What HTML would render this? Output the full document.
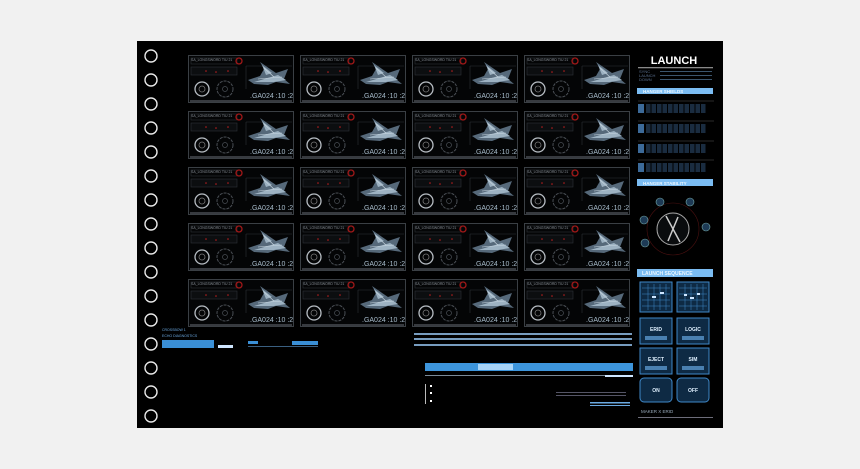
<!DOCTYPE html>
<html><head><meta charset="utf-8"><style>
html,body{margin:0;padding:0;background:#f1f1f1;}
svg{display:block}
text{font-family:"Liberation Sans",sans-serif;}
</style></head><body>
<svg width="860" height="469" viewBox="0 0 860 469" xmlns="http://www.w3.org/2000/svg">
<rect width="860" height="469" fill="#f1f1f1"/>
<rect x="137" y="41" width="586" height="387" fill="#000"/>
<defs>
<g id="tile">
 <rect x="0.5" y="0.5" width="105" height="47" fill="#040506" stroke="#3a3f44"/>
 <line x1="2" y1="46" x2="104" y2="46" stroke="#6a7078"/>
 <rect x="3" y="3" width="46" height="6" fill="none" stroke="#2e3338" stroke-width="0.6"/>
 <rect x="3" y="12" width="46" height="8" fill="#0c0e10" stroke="#2e3338" stroke-width="0.6"/>
 <circle cx="18" cy="16" r="0.8" fill="#c02020"/><circle cx="28" cy="17" r="0.8" fill="#c02020"/><circle cx="40" cy="16" r="0.8" fill="#c02020"/>
 <circle cx="51" cy="6" r="3" fill="none" stroke="#a01818" stroke-width="1.3"/>
 <path d="M58 11 L104 11 M58 11 L58 34" stroke="#2e3338" stroke-width="0.6" fill="none"/>
 <path d="M72 7 L88 18 L100 14 L96 24 L102 29 L88 27 L80 30 L66 29 L60 25 L72 21 L76 14 Z" fill="#56697a"/>
 <path d="M66 27 L90 20 L98 25 L86 27 Z M74 10 L84 18 L78 20 Z" fill="#9db2c2"/>
 <path d="M70 24 L94 22 M76 13 L86 22" stroke="#c8d6e0" stroke-width="0.6"/>
 <circle cx="14" cy="34" r="7" fill="none" stroke="#b8bec4" stroke-width="1.3"/>
 <circle cx="14" cy="34" r="3" fill="none" stroke="#777" stroke-width="0.8"/>
 <circle cx="37" cy="34" r="8" fill="none" stroke="#4a4f55" stroke-width="1" stroke-dasharray="3 1"/>
 <circle cx="37" cy="34" r="2.5" fill="none" stroke="#4a4f55" stroke-width="0.7"/>
</g>
<g id="seg" fill="#1a2c40">
 <rect x="0" y="0" width="6" height="9" fill="#3c6a99"/>
 <rect x="8" y="0" width="4.5" height="9"/><rect x="13.5" y="0" width="4.5" height="9"/><rect x="19" y="0" width="4.5" height="9"/><rect x="24.5" y="0" width="4.5" height="9"/><rect x="30" y="0" width="4.5" height="9"/><rect x="35.5" y="0" width="4.5" height="9"/><rect x="41" y="0" width="4.5" height="9"/><rect x="46.5" y="0" width="4.5" height="9"/><rect x="52" y="0" width="4.5" height="9"/><rect x="57.5" y="0" width="4.5" height="9"/><rect x="63" y="0" width="4.5" height="9"/>
</g>
</defs>
<g fill="none" stroke="#e8e8e8" stroke-width="1.4">
<circle cx="151" cy="56" r="6"/><circle cx="151" cy="80" r="6"/><circle cx="151" cy="104" r="6"/><circle cx="151" cy="128" r="6"/>
<circle cx="151" cy="152" r="6"/><circle cx="151" cy="176" r="6"/><circle cx="151" cy="200" r="6"/><circle cx="151" cy="224" r="6"/>
<circle cx="151" cy="248" r="6"/><circle cx="151" cy="272" r="6"/><circle cx="151" cy="296" r="6"/><circle cx="151" cy="320" r="6"/>
<circle cx="151" cy="344" r="6"/><circle cx="151" cy="368" r="6"/><circle cx="151" cy="392" r="6"/><circle cx="151" cy="416" r="6"/>
</g>
<g>
<use href="#tile" x="188" y="55"/><use href="#tile" x="300" y="55"/><use href="#tile" x="412" y="55"/><use href="#tile" x="524" y="55"/>
<use href="#tile" x="188" y="111"/><use href="#tile" x="300" y="111"/><use href="#tile" x="412" y="111"/><use href="#tile" x="524" y="111"/>
<use href="#tile" x="188" y="167"/><use href="#tile" x="300" y="167"/><use href="#tile" x="412" y="167"/><use href="#tile" x="524" y="167"/>
<use href="#tile" x="188" y="223"/><use href="#tile" x="300" y="223"/><use href="#tile" x="412" y="223"/><use href="#tile" x="524" y="223"/>
<use href="#tile" x="188" y="279"/><use href="#tile" x="300" y="279"/><use href="#tile" x="412" y="279"/><use href="#tile" x="524" y="279"/>
</g>
<g fill="#a8bccb" font-size="7">
<text x="250" y="98">.GA024 :10 :2</text><text x="362" y="98">.GA024 :10 :2</text><text x="474" y="98">.GA024 :10 :2</text><text x="586" y="98">.GA024 :10 :2</text>
<text x="250" y="154">.GA024 :10 :2</text><text x="362" y="154">.GA024 :10 :2</text><text x="474" y="154">.GA024 :10 :2</text><text x="586" y="154">.GA024 :10 :2</text>
<text x="250" y="210">.GA024 :10 :2</text><text x="362" y="210">.GA024 :10 :2</text><text x="474" y="210">.GA024 :10 :2</text><text x="586" y="210">.GA024 :10 :2</text>
<text x="250" y="266">.GA024 :10 :2</text><text x="362" y="266">.GA024 :10 :2</text><text x="474" y="266">.GA024 :10 :2</text><text x="586" y="266">.GA024 :10 :2</text>
<text x="250" y="322">.GA024 :10 :2</text><text x="362" y="322">.GA024 :10 :2</text><text x="474" y="322">.GA024 :10 :2</text><text x="586" y="322">.GA024 :10 :2</text>
</g>
<g fill="#8a9098" font-size="3.5">
<text x="191" y="61">SA_LONGSWORD  TIU 21</text><text x="303" y="61">SA_LONGSWORD  TIU 21</text><text x="415" y="61">SA_LONGSWORD  TIU 21</text><text x="527" y="61">SA_LONGSWORD  TIU 21</text>
<text x="191" y="117">SA_LONGSWORD  TIU 21</text><text x="303" y="117">SA_LONGSWORD  TIU 21</text><text x="415" y="117">SA_LONGSWORD  TIU 21</text><text x="527" y="117">SA_LONGSWORD  TIU 21</text>
<text x="191" y="173">SA_LONGSWORD  TIU 21</text><text x="303" y="173">SA_LONGSWORD  TIU 21</text><text x="415" y="173">SA_LONGSWORD  TIU 21</text><text x="527" y="173">SA_LONGSWORD  TIU 21</text>
<text x="191" y="229">SA_LONGSWORD  TIU 21</text><text x="303" y="229">SA_LONGSWORD  TIU 21</text><text x="415" y="229">SA_LONGSWORD  TIU 21</text><text x="527" y="229">SA_LONGSWORD  TIU 21</text>
<text x="191" y="285">SA_LONGSWORD  TIU 21</text><text x="303" y="285">SA_LONGSWORD  TIU 21</text><text x="415" y="285">SA_LONGSWORD  TIU 21</text><text x="527" y="285">SA_LONGSWORD  TIU 21</text>
</g>
<rect x="162" y="340" width="52" height="8" fill="#3a8fd6"/>
<text x="162" y="331" font-size="3.5" fill="#6aa8e0">CROSSBOW 1</text>
<text x="162" y="337" font-size="3.5" fill="#6aa8e0">ECHO DIAGNOSTICS</text>
<rect x="218" y="345" width="15" height="3" fill="#cfe6ff"/>
<rect x="248" y="341" width="10" height="3" fill="#3a8fd6"/>
<rect x="292" y="341" width="26" height="4" fill="#3a8fd6"/>
<rect x="248" y="346" width="70" height="1" fill="#3a5f80"/>
<g fill="#9fd0ff" opacity=".75">
<rect x="414" y="333" width="218" height="2"/>
<rect x="414" y="338" width="218" height="2"/>
<rect x="414" y="344" width="218" height="2"/>
</g>
<rect x="425" y="363" width="208" height="8" fill="#3d95dc"/>
<rect x="478" y="364" width="35" height="6" fill="#a8d4f8"/>
<rect x="425" y="375" width="208" height="1" fill="#7a8a98"/>
<rect x="605" y="375" width="28" height="2" fill="#cfe6ff"/>
<rect x="425" y="384" width="1" height="20" fill="#bbb"/>
<rect x="430" y="385" width="2" height="2" fill="#fff"/><rect x="430" y="392" width="2" height="2" fill="#fff"/><rect x="430" y="400" width="2" height="2" fill="#fff"/>
<rect x="556" y="392" width="70" height="1" fill="#556"/><rect x="556" y="395" width="70" height="1" fill="#556"/>
<rect x="590" y="402" width="40" height="1.5" fill="#6aa8e0"/><rect x="590" y="405" width="40" height="1" fill="#6aa8e0"/>
<text x="674" y="64" font-size="11" font-weight="bold" fill="#fff" text-anchor="middle">LAUNCH</text>
<rect x="638" y="67" width="75" height="1.3" fill="#888"/>
<g font-size="4" fill="#5a7090"><text x="639" y="73">SYNC</text><text x="639" y="77">LAUNCH</text><text x="639" y="81">DOWN</text></g>
<g fill="#4a6a88"><rect x="660" y="71" width="52" height="0.8"/><rect x="660" y="75" width="52" height="0.8"/><rect x="660" y="79" width="52" height="0.8"/></g>
<rect x="637" y="88" width="76" height="6" fill="#7bbcf2"/>
<text x="643" y="93" font-size="4.5" fill="#eaf6ff" font-weight="bold">HANGER SHIELDS</text>
<use href="#seg" x="638" y="104"/><use href="#seg" x="638" y="124"/><use href="#seg" x="638" y="144"/><use href="#seg" x="638" y="163"/>
<g stroke="#555" stroke-width=".5"><line x1="638" y1="101" x2="714" y2="101"/><line x1="638" y1="121" x2="714" y2="121"/><line x1="638" y1="141" x2="714" y2="141"/><line x1="638" y1="160" x2="714" y2="160"/></g>
<rect x="637" y="179" width="76" height="7" fill="#7bbcf2"/>
<text x="643" y="185" font-size="4.5" fill="#eaf6ff" font-weight="bold">HANGER STABILITY</text>
<circle cx="673" cy="229" r="26" fill="none" stroke="#4a1010" stroke-width=".6"/>
<circle cx="673" cy="229" r="16" fill="#0a0c0e" stroke="#aaa" stroke-width="1"/>
<path d="M666 216 L680 242 M678 217 L668 241" stroke="#ccc" stroke-width="1.5"/>
<g fill="#1d3a55" stroke="#7aa" stroke-width=".6"><circle cx="660" cy="202" r="4"/><circle cx="690" cy="202" r="4"/><circle cx="706" cy="227" r="4"/><circle cx="644" cy="220" r="4"/><circle cx="645" cy="243" r="4"/></g>
<rect x="637" y="269" width="76" height="8" fill="#7bbcf2"/>
<text x="642" y="275" font-size="5" fill="#eaf6ff" font-weight="bold">LAUNCH SEQUENCE</text>
<g fill="#0e2a44" stroke="#3f88c8" stroke-width="1">
<rect x="640" y="282" width="32" height="30"/><rect x="677" y="282" width="32" height="30"/>
<rect x="640" y="318" width="32" height="26"/><rect x="677" y="318" width="32" height="26"/>
<rect x="640" y="348" width="32" height="26"/><rect x="677" y="348" width="32" height="26"/>
<rect x="640" y="378" width="32" height="24" rx="4"/><rect x="677" y="378" width="32" height="24" rx="4"/>
</g>
<g stroke="#3f88c8" stroke-width=".5">
<path d="M642 288 H670 M642 294 H670 M642 300 H670 M642 306 H670 M648 284 V310 M654 284 V310 M660 284 V310 M666 284 V310"/>
<path d="M679 288 H707 M679 294 H707 M679 300 H707 M679 306 H707 M685 284 V310 M691 284 V310 M697 284 V310 M703 284 V310"/>
</g>
<g fill="#cfe6ff"><rect x="652" y="296" width="4" height="2"/><rect x="660" y="292" width="4" height="2"/><rect x="684" y="294" width="3" height="2"/><rect x="690" y="297" width="4" height="2"/><rect x="697" y="293" width="3" height="2"/></g>
<g font-size="5" fill="#dff0ff" font-weight="bold" text-anchor="middle">
<text x="656" y="331">ERID</text><text x="693" y="331">LOGIC</text>
<text x="656" y="361">EJECT</text><text x="693" y="361">SIM</text>
<text x="656" y="392">ON</text><text x="693" y="392">OFF</text>
</g>
<g fill="#4a80b0"><rect x="645" y="336" width="22" height="4"/><rect x="682" y="336" width="22" height="4"/><rect x="645" y="366" width="22" height="4"/><rect x="682" y="366" width="22" height="4"/></g>
<text x="641" y="413" font-size="4.5" fill="#9ab">MAKER X  ERID</text>
<rect x="638" y="417" width="75" height="0.8" fill="#889"/>
</svg>
</body></html>
